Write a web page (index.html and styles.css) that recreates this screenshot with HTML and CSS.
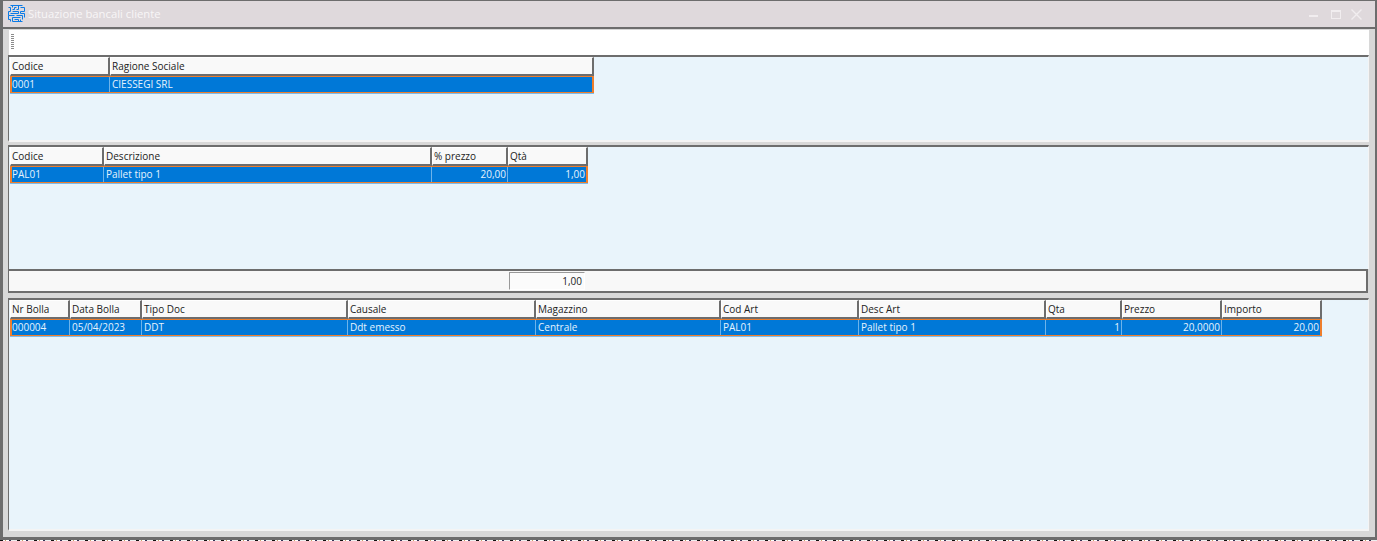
FILE: index.html
```html
<!DOCTYPE html>
<html lang="en">

<head>
    <meta charset="UTF-8">
    <title>Situazione bancali cliente</title>
    <link rel="stylesheet" href="styles.css">
</head>

<body>
    <div class="window">
        <div class="titlebar">
            <svg class="app-icon" width="17" height="17" viewBox="0 0 17 17" fill="none" stroke="#0b7be6" stroke-width="1">
                <path d="M2.5 0.5H14.5M4.5 0.5V2.5M10.5 0.5V4.5H8.5" />
                <path d="M0.5 2.5H2.5V6.5H0.5V10.5H6.5M4.5 4.5H6.5V2.5H8.5M12.5 2.5H16.5V6.5H12.5V8.5H16.5V12.5" />
                <path d="M4.5 6.5H10.5V8.5H2.5M8.5 10.5H14.5V14.5M0.5 10.5V14.5H2.5M4.5 12.5H12.5" />
                <path d="M4.5 12.5V16.5H14.5M2.5 14.5V16.5M6.5 14.5H10.5V16.5M12.5 14.5V16.5" />
            </svg>
            <span class="title">Situazione bancali cliente</span>
            <div class="win-btns">
                <span class="win-min"></span>
                <span class="win-max"></span>
                <svg class="win-close" width="11" height="11" viewBox="0 0 11 11" stroke="#f1edef" stroke-width="1.4">
                    <path d="M0.5 0.5L10.5 10.5M10.5 0.5L0.5 10.5" />
                </svg>
            </div>
        </div>

        <div class="content">
            <div class="toolbar">
                <span class="grip"></span>
            </div>

            <div class="panel panel-clienti">
                <div class="grid grid-clienti">
                    <div class="row head">
                        <div class="cell">Codice</div>
                        <div class="cell">Ragione Sociale</div>
                    </div>
                    <div class="row sel">
                        <div class="cell">0001</div>
                        <div class="cell">CIESSEGI SRL</div>
                    </div>
                </div>
            </div>

            <div class="panel panel-bancali">
                <div class="grid grid-bancali">
                    <div class="row head">
                        <div class="cell">Codice</div>
                        <div class="cell">Descrizione</div>
                        <div class="cell">% prezzo</div>
                        <div class="cell">Qtà</div>
                    </div>
                    <div class="row sel">
                        <div class="cell">PAL01</div>
                        <div class="cell">Pallet tipo 1</div>
                        <div class="cell num">20,00</div>
                        <div class="cell num">1,00</div>
                    </div>
                </div>
            </div>

            <div class="totals">
                <div class="total-box">1,00</div>
            </div>

            <div class="panel panel-bolle">
                <div class="grid grid-bolle">
                    <div class="row head">
                        <div class="cell">Nr Bolla</div>
                        <div class="cell">Data Bolla</div>
                        <div class="cell">Tipo Doc</div>
                        <div class="cell">Causale</div>
                        <div class="cell">Magazzino</div>
                        <div class="cell">Cod Art</div>
                        <div class="cell">Desc Art</div>
                        <div class="cell">Qta</div>
                        <div class="cell">Prezzo</div>
                        <div class="cell">Importo</div>
                    </div>
                    <div class="row sel">
                        <div class="cell">000004</div>
                        <div class="cell">05/04/2023</div>
                        <div class="cell">DDT</div>
                        <div class="cell">Ddt emesso</div>
                        <div class="cell">Centrale</div>
                        <div class="cell">PAL01</div>
                        <div class="cell">Pallet tipo 1</div>
                        <div class="cell num">1</div>
                        <div class="cell num">20,0000</div>
                        <div class="cell num">20,00</div>
                    </div>
                </div>
            </div>
        </div>
    </div>
    <div class="desktop-strip"></div>
</body>

</html>
```

FILE: styles.css
```css
* {
    box-sizing: border-box;
    padding: 0;
    margin: 0;
}

html,
body {
    width: 100%;
    height: 100%;
    overflow: hidden;
}

body {
    display: flex;
    flex-direction: column;
    background: #6d6d6d;
    font-family: "Open Sans", "Noto Sans", sans-serif;
    font-size: 10px;
    color: #222;
}

.window {
    flex: 1;
    display: flex;
    flex-direction: column;
    min-height: 0;
    padding: 1px 2px 3px 3px;
}

.titlebar {
    height: 27px;
    flex: none;
    display: flex;
    align-items: center;
    padding-left: 5px;
    background: #dfd9dc;
    border-bottom: 1px solid #6d6d6d;
}

.app-icon {
    flex: none;
    margin: 0 3px 2px 0;
}

.title {
    color: #f8f6f7;
    font-size: 11.3px;
    margin-bottom: 2px;
}

.win-btns {
    margin-left: auto;
    display: flex;
    align-items: center;
    padding-right: 13px;
}

.win-min {
    width: 9px;
    height: 2px;
    margin-top: 4px;
    background: #f1edef;
}

.win-max {
    width: 10px;
    height: 9px;
    margin-left: 13px;
    border: 1px solid #f1edef;
    border-top-width: 2px;
}

.win-close {
    margin-left: 10px;
}

.content {
    flex: 1;
    display: flex;
    flex-direction: column;
    min-height: 0;
    padding: 1px 6px 6px 5px;
    background: #d8d8d8;
    border-top: 1px solid #6d6d6d;
}

.toolbar {
    height: 25px;
    flex: none;
    padding: 4px 0 0 2px;
    margin-left: 1px;
    background: #fff;
}

.grip {
    display: block;
    width: 3px;
    height: 16px;
    background: repeating-linear-gradient(#8b8b8b 0 1px, transparent 1px 2px);
}

.panel {
    background: #e9f4fb;
    border-top: 2px solid #6d6d6d;
    border-left: 1px solid #6d6d6d;
    border-right: 1px solid #f4f4f4;
    border-bottom: 2px solid #f4f4f4;
}

.panel-clienti {
    height: 87px;
    flex: none;
    margin-bottom: 3px;
}

.panel-bancali {
    height: 124px;
    flex: none;
    border-bottom: 0;
}

.panel-bolle {
    flex: 1;
    min-height: 0;
    margin-top: 5px;
}

.grid {
    padding-left: 1px;
}

.grid-clienti {
    width: 585px;
}

.grid-clienti .row {
    grid-template-columns: 99px 1fr;
}

.grid-clienti .head {
    grid-template-columns: 100px 1fr;
}

.grid-bancali {
    width: 579px;
}

.grid-bancali .row {
    grid-template-columns: 93px 328px 76px 1fr;
}

.grid-bancali .head {
    grid-template-columns: 94px 328px 76px 1fr;
}

.grid-bolle {
    width: 1313px;
}

.grid-bolle .row {
    grid-template-columns: 59px 72px 206px 188px 185px 138px 187px 76px 100px 1fr;
}

.grid-bolle .head {
    grid-template-columns: 60px 72px 206px 188px 185px 138px 187px 76px 100px 1fr;
}

.row {
    display: grid;
}

.cell {
    overflow: hidden;
    white-space: nowrap;
    padding: 0 2px;
}

.head {
    height: 19px;
}

.head .cell {
    line-height: 17px;
    padding-left: 1px;
    background: #f9f9f9;
    border-top: 1px solid #fff;
    border-left: 1px solid #fff;
    border-right: 2px solid #6d6d6d;
    border-bottom: 2px solid #6d6d6d;
}

.sel {
    height: 17px;
    background: #0078d7;
    border: 1px solid #ee7e2d;
    box-shadow: 0 1px 0 #7cbcec, inset 1px 0 0 #ee7e2d, inset -1px 0 0 #ee7e2d;
    color: #e6f3fd;
}

.sel .cell {
    line-height: 15px;
    border-right: 1px solid #6db3ea;
}

.sel .cell:first-child {
    padding-left: 1px;
}

.sel .cell:last-child {
    border-right: 0;
}

.sel .num {
    text-align: right;
    padding-right: 1px;
}

.sel .num:last-child {
    padding-right: 2px;
}

.totals {
    height: 24px;
    flex: none;
    display: flex;
    align-items: center;
    padding-left: 500px;
    background: #f8f8f8;
    border: 2px solid #6d6d6d;
    border-left-width: 1px;
    margin-right: 1px;
}

.total-box {
    width: 76px;
    height: 18px;
    line-height: 17px;
    padding-right: 2px;
    text-align: right;
    background: #fbfbfb;
    border-top: 1px solid #999;
    border-left: 1px solid #999;
    border-right: 1px solid #fff;
    border-bottom: 1px solid #fff;
}

.desktop-strip {
    height: 1px;
    flex: none;
    background: repeating-linear-gradient(90deg, #111 0 3px, #f5f5f5 3px 5px, #c9a060 5px 6px, #fff 6px 9px, #335 9px 11px, #eee 11px 17px);
}
```
